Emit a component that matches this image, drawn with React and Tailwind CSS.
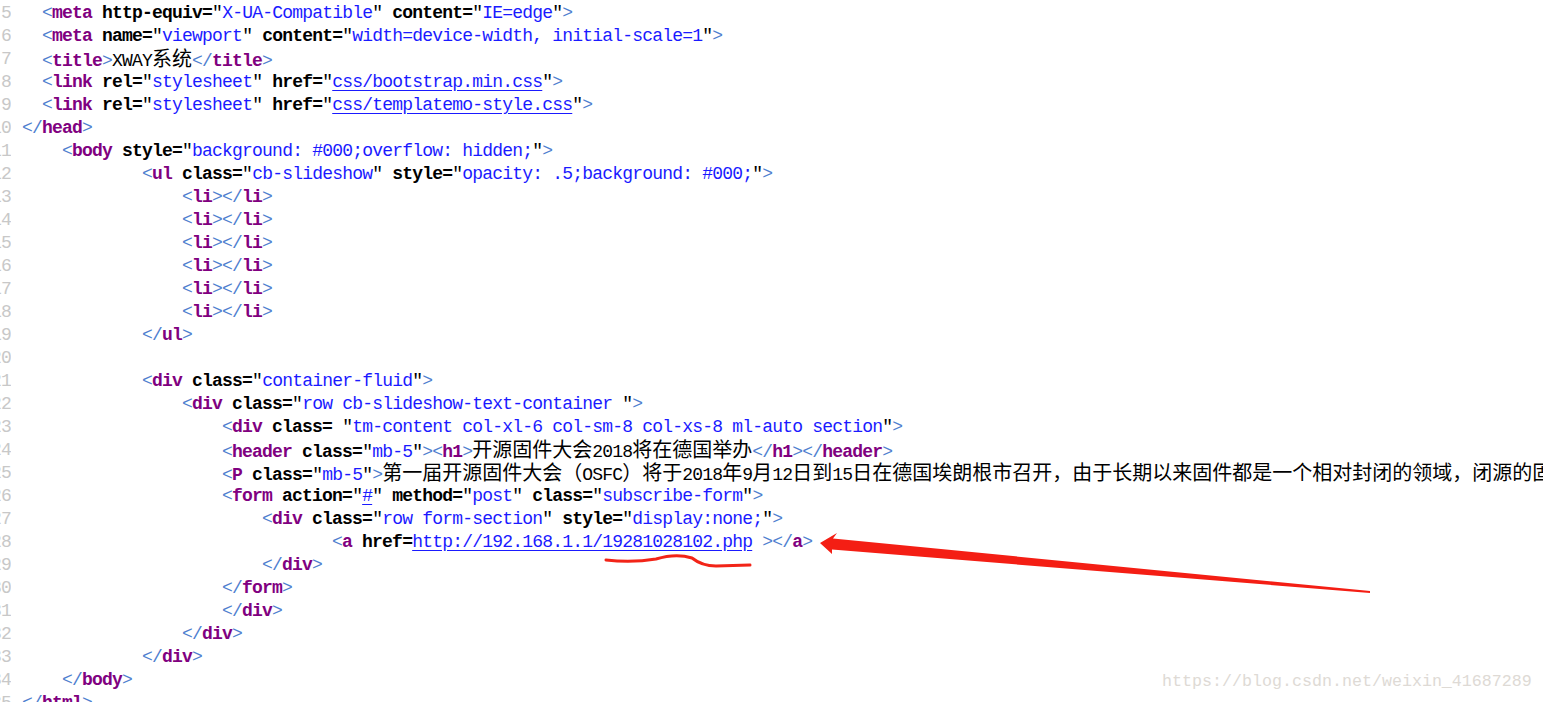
import React from "react";

const LINES = [
  [5, '  <meta http-equiv="X-UA-Compatible" content="IE=edge">'],
  [6, '  <meta name="viewport" content="width=device-width, initial-scale=1">'],
  [7, '  <title>XWAY系统</title>'],
  [8, '  <link rel="stylesheet" href="css/bootstrap.min.css">'],
  [9, '  <link rel="stylesheet" href="css/templatemo-style.css">'],
  [10, '</head>'],
  [11, '    <body style="background: #000;overflow: hidden;">'],
  [12, '            <ul class="cb-slideshow" style="opacity: .5;background: #000;">'],
  [13, '                <li></li>'],
  [14, '                <li></li>'],
  [15, '                <li></li>'],
  [16, '                <li></li>'],
  [17, '                <li></li>'],
  [18, '                <li></li>'],
  [19, '            </ul>'],
  [20, ''],
  [21, '            <div class="container-fluid">'],
  [22, '                <div class="row cb-slideshow-text-container ">'],
  [23, '                    <div class= "tm-content col-xl-6 col-sm-8 col-xs-8 ml-auto section">'],
  [24, '                    <header class="mb-5"><h1>开源固件大会2018将在德国举办</h1></header>'],
  [25, '                    <P class="mb-5">第一届开源固件大会（OSFC）将于2018年9月12日到15日在德国埃朗根市召开，由于长期以来固件都是一个相对封闭的领域，闭源的固件'],
  [26, '                    <form action="#" method="post" class="subscribe-form">'],
  [27, '                        <div class="row form-section" style="display:none;">'],
  [28, '                               <a href=http://192.168.1.1/19281028102.php ></a>'],
  [29, '                        </div>'],
  [30, '                    </form>'],
  [31, '                    </div>'],
  [32, '                </div>'],
  [33, '            </div>'],
  [34, '    </body>'],
  [35, '</html>'],
];

const CJK = /([\u3000-\u303f\u3400-\u9fff\uff00-\uffef]+)/;

function Text({ s, cls = "" }) {
  const parts = s.split(CJK).filter((p) => p !== "");
  return parts.map((p, i) =>
    CJK.test(p) ? (
      <span
        key={i}
        className={`${cls} text-[20px] tracking-[0px] font-normal`}
        style={{ fontFamily: '"Noto Sans CJK SC", sans-serif' }}
      >
        {p}
      </span>
    ) : (
      <span key={i} className={cls}>
        {p}
      </span>
    )
  );
}

function tokenize(s) {
  const out = [];
  let i = 0;
  let inTag = false;
  let lastAttr = "";
  let k = 0;
  const push = (el) => out.push(React.cloneElement(el, { key: k++ }));
  while (i < s.length) {
    const c = s[i];
    if (!inTag) {
      if (c === "<") {
        let b = "<";
        i++;
        if (s[i] === "/") {
          b += "/";
          i++;
        }
        push(<span className="text-[#4f7fcf] font-normal">{b}</span>);
        let name = "";
        while (i < s.length && /[A-Za-z0-9]/.test(s[i])) name += s[i++];
        push(<span className="text-[#800080] font-bold">{name}</span>);
        inTag = true;
      } else {
        let t = "";
        while (i < s.length && s[i] !== "<") t += s[i++];
        push(
          <span>
            <Text s={t} cls="text-black" />
          </span>
        );
      }
    } else {
      if (c === " ") {
        let t = "";
        while (i < s.length && s[i] === " ") t += s[i++];
        push(<span>{t}</span>);
      } else if (c === ">") {
        push(<span className="text-[#4f7fcf] font-normal">{">"}</span>);
        i++;
        inTag = false;
      } else if (c === "=") {
        push(<span className="text-black font-bold">=</span>);
        i++;
      } else if (c === '"') {
        i++;
        let v = "";
        while (i < s.length && s[i] !== '"') v += s[i++];
        i++;
        const link = lastAttr === "href" || lastAttr === "action";
        push(<span className="text-black">{'"'}</span>);
        push(
          <span
            className={`text-[#1a1aff] ${link ? "underline underline-offset-[3px] decoration-[#1a1aff]" : ""}`}
          >
            {v}
          </span>
        );
        push(<span className="text-black">{'"'}</span>);
      } else if (s[i - 1] === "=") {
        let v = "";
        while (i < s.length && s[i] !== " " && s[i] !== ">") v += s[i++];
        push(
          <span className="text-[#1a1aff] underline underline-offset-[3px] decoration-[#1a1aff]">
            {v}
          </span>
        );
      } else {
        let n = "";
        while (i < s.length && /[A-Za-z0-9-]/.test(s[i])) n += s[i++];
        if (!n) {
          n = s[i++];
        }
        lastAttr = n;
        push(<span className="text-black font-bold">{n}</span>);
      }
    }
  }
  return out;
}

export default function App() {
  return (
    <div
      className="relative w-[1543px] h-[702px] overflow-hidden bg-white"
      style={{ fontFamily: '"Liberation Mono", "Noto Sans CJK SC", monospace' }}
    >
      <div className="flex flex-col pt-[2px]">
        {LINES.map(([n, s]) => (
          <div key={n} className="flex h-[23px] items-center">
            <div className="flex w-[11px] shrink-0 justify-end overflow-hidden text-[18px] tracking-[-0.8px] leading-[23px] text-[#c8c8c8] whitespace-pre">
              <span>{n}</span>
            </div>
            <div className="ml-[11px] whitespace-pre text-[18px] tracking-[-0.8px] leading-[23px] text-black">
              {tokenize(s)}
            </div>
          </div>
        ))}
      </div>

      <svg
        className="pointer-events-none absolute left-0 top-0"
        width="1543"
        height="702"
        viewBox="0 0 1543 702"
      >
        <path
          d="M606 560 Q 632 563 656 559 Q 676 553 692 558 Q 702 566 716 566 L 750 565"
          fill="none"
          stroke="#f22418"
          strokeWidth="3"
          strokeLinecap="round"
        />
        <polygon
          points="820,543 837,533 833,538.5 1370,591 1370,593 832,549.5 832,554"
          fill="#f41e14"
        />
      </svg>

      <div
        className="absolute left-[1162px] top-[671px] text-[16.67px] leading-[22px] text-[#dedad5] whitespace-pre"
        style={{ fontFamily: '"Liberation Mono", monospace' }}
      >
        https://blog.csdn.net/weixin_41687289
      </div>
    </div>
  );
}
